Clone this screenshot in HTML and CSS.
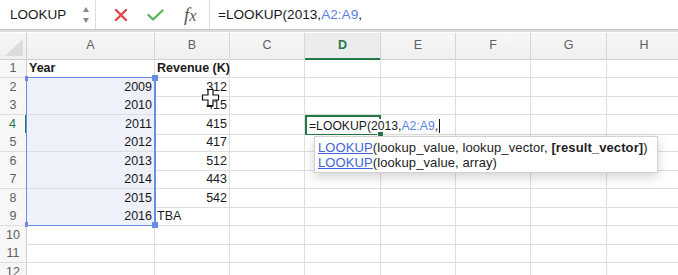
FILE: index.html
```html
<!DOCTYPE html>
<html lang="en">
<head>
    <meta charset="UTF-8">
    <title>LOOKUP</title>
    <link rel="stylesheet" href="styles.css">
</head>
<body>

    <!-- Formula bar -->
    <div class="formula-bar">
        <div class="name-box">
            <span class="name">LOOKUP</span>
            <span class="spin">
                <span class="up"></span>
                <span class="down"></span>
            </span>
        </div>
        <div class="actions">
            <svg class="icon" width="14" height="12" viewBox="0 0 14 12">
                <path d="M2 1 L12 11 M12 1 L2 11" stroke="#e3464c" stroke-width="2.4" stroke-linecap="round"/>
            </svg>
            <svg class="icon" width="17" height="12" viewBox="0 0 17 12">
                <path d="M1.5 6 L6 10.5 L15.5 1.5" fill="none" stroke="#5bb75a" stroke-width="2.4" stroke-linecap="round" stroke-linejoin="round"/>
            </svg>
            <span class="fx">f<span>x</span></span>
        </div>
        <div class="formula">=LOOKUP(2013,<span class="ref">A2:A9</span>,</div>
    </div>

    <!-- Sheet -->
    <div class="sheet">
        <div class="row head">
            <div class="corner"></div>
            <div class="ch">A</div><div class="ch">B</div><div class="ch">C</div>
            <div class="ch active">D</div><div class="ch">E</div><div class="ch">F</div>
            <div class="ch">G</div><div class="ch">H</div>
        </div>
        <div class="row">
            <div class="rh">1</div><div class="c bold">Year</div><div class="c bold">Revenue (K)</div>
            <div class="c"></div><div class="c"></div><div class="c"></div><div class="c"></div><div class="c"></div><div class="c"></div>
        </div>
        <div class="row">
            <div class="rh">2</div><div class="c num sel">2009</div><div class="c num">312</div>
            <div class="c"></div><div class="c"></div><div class="c"></div><div class="c"></div><div class="c"></div><div class="c"></div>
        </div>
        <div class="row">
            <div class="rh">3</div><div class="c num sel">2010</div><div class="c num">415</div>
            <div class="c"></div><div class="c"></div><div class="c"></div><div class="c"></div><div class="c"></div><div class="c"></div>
        </div>
        <div class="row">
            <div class="rh active">4</div><div class="c num sel">2011</div><div class="c num">415</div>
            <div class="c"></div>
            <div class="c editing"><span class="edit-text">=LOOKUP(2013,<span class="ref">A2:A9</span>,<span class="caret"></span></span><span class="fill-handle"></span></div>
            <div class="c"></div><div class="c"></div><div class="c"></div><div class="c"></div>
        </div>
        <div class="row">
            <div class="rh">5</div><div class="c num sel">2012</div><div class="c num">417</div>
            <div class="c"></div><div class="c"></div><div class="c"></div><div class="c"></div><div class="c"></div><div class="c"></div>
        </div>
        <div class="row">
            <div class="rh">6</div><div class="c num sel">2013</div><div class="c num">512</div>
            <div class="c"></div><div class="c"></div><div class="c"></div><div class="c"></div><div class="c"></div><div class="c"></div>
        </div>
        <div class="row">
            <div class="rh">7</div><div class="c num sel">2014</div><div class="c num">443</div>
            <div class="c"></div><div class="c"></div><div class="c"></div><div class="c"></div><div class="c"></div><div class="c"></div>
        </div>
        <div class="row">
            <div class="rh">8</div><div class="c num sel">2015</div><div class="c num">542</div>
            <div class="c"></div><div class="c"></div><div class="c"></div><div class="c"></div><div class="c"></div><div class="c"></div>
        </div>
        <div class="row">
            <div class="rh">9</div><div class="c num sel">2016</div><div class="c">TBA</div>
            <div class="c"></div><div class="c"></div><div class="c"></div><div class="c"></div><div class="c"></div><div class="c"></div>
        </div>
        <div class="row">
            <div class="rh">10</div><div class="c"></div><div class="c"></div>
            <div class="c"></div><div class="c"></div><div class="c"></div><div class="c"></div><div class="c"></div><div class="c"></div>
        </div>
        <div class="row">
            <div class="rh">11</div><div class="c"></div><div class="c"></div>
            <div class="c"></div><div class="c"></div><div class="c"></div><div class="c"></div><div class="c"></div><div class="c"></div>
        </div>
        <div class="row">
            <div class="rh">12</div><div class="c"></div><div class="c"></div>
            <div class="c"></div><div class="c"></div><div class="c"></div><div class="c"></div><div class="c"></div><div class="c"></div>
        </div>

        <!-- Range A2:A9 highlighted by the formula -->
        <div class="range">
            <span class="handle tl"></span>
            <span class="handle tr"></span>
            <span class="handle bl"></span>
            <span class="handle br"></span>
        </div>

        <!-- Function hint -->
        <div class="hint">
            <div><a href="#">LOOKUP</a>(lookup_value, lookup_vector, <b>[result_vector]</b>)</div>
            <div><a href="#">LOOKUP</a>(lookup_value, array)</div>
        </div>

        <!-- Mouse pointer -->
        <svg class="pointer" width="19" height="19" viewBox="0 0 19 19">
            <path d="M7 1.5 H12 V7 H17.5 V12 H12 V17.5 H7 V12 H1.5 V7 H7 Z" fill="#fff" stroke="#111" stroke-width="1.2"/>
        </svg>
    </div>

</body>
</html>
```

FILE: styles.css
```css
body {
    margin: 0;
    width: 678px;
    height: 275px;
    overflow: hidden;
    background-color: #fff;
    font-family: "Liberation Sans", Arial, sans-serif;
    color: #1a1a1a;
}

/* Formula bar */
.formula-bar {
    display: flex;
    align-items: center;
    height: 29px;
    border-bottom: 1px solid #c4c4c4;
    box-shadow: 0 2px 0 #dcdcdc;
    margin-bottom: 3px;
}

.name-box {
    display: flex;
    align-items: center;
    width: 96px;
    height: 100%;
    border-right: 1px solid #dcdcdc;
    padding-left: 10px;
    box-sizing: border-box;
}

.name {
    font-size: 13.5px;
    flex-grow: 1;
}

.spin {
    display: flex;
    flex-direction: column;
    gap: 6px;
    margin-right: 6px;
}

.spin .up,
.spin .down {
    width: 0;
    height: 0;
    border-left: 3.5px solid transparent;
    border-right: 3.5px solid transparent;
}

.spin .up {
    border-bottom: 5px solid #8a8a8a;
}

.spin .down {
    border-top: 5px solid #8a8a8a;
}

.actions {
    display: flex;
    align-items: center;
    height: 100%;
    gap: 19px;
    padding-left: 18px;
    padding-right: 8px;
    border-right: 1px solid #dcdcdc;
    box-sizing: border-box;
    width: 114px;
}

.fx {
    font-family: "Liberation Serif", serif;
    font-style: italic;
    font-size: 19px;
    color: #555;
    margin-left: 1px;
}

.fx span {
    font-size: 16px;
}

.formula {
    padding-left: 8px;
    font-size: 13.6px;
    white-space: nowrap;
}

.ref {
    color: #5a7fe8;
}

/* Sheet */
.sheet {
    position: relative;
}

.row {
    display: grid;
    grid-template-columns: 27px 128px 75px 75px 76px 75px 75px 76px 75px;
    height: 18.5px;
}

.row.head {
    height: 26px;
    background: linear-gradient(#f7f7f7, #efefef);
}

.corner {
    border-right: 1px solid #d0d0d0;
    border-bottom: 1px solid #d0d0d0;
    position: relative;
}

.corner::after {
    content: "";
    position: absolute;
    right: 3px;
    bottom: 3px;
    border-left: 18px solid transparent;
    border-bottom: 17px solid #dcdcdc;
}

.ch {
    border-right: 1px solid #d6d6d6;
    border-bottom: 1px solid #d0d0d0;
    text-align: center;
    font-size: 12.5px;
    line-height: 25px;
    color: #606060;
}

.ch.active {
    color: #237a47;
    font-weight: bold;
    border-bottom: 2px solid #237a47;
    background-color: #ececec;
}

.rh {
    background-color: #f7f7f7;
    border-right: 1px solid #d0d0d0;
    border-bottom: 1px solid #dedede;
    text-align: center;
    font-size: 12.5px;
    line-height: 18px;
    color: #606060;
}

.rh.active {
    color: #237a47;
    border-right: 2px solid #237a47;
}

.c {
    border-right: 1px solid #dedede;
    border-bottom: 1px solid #dedede;
    font-size: 12.5px;
    line-height: 18px;
    padding: 0 2px;
    white-space: nowrap;
    box-sizing: border-box;
}

.bold {
    font-weight: bold;
}

.num {
    text-align: right;
}

.sel {
    background-color: #eef0fa;
}

/* Cell being edited: green frame, text runs over the next cell */
.editing {
    position: relative;
    z-index: 2;
    overflow: visible;
    border: none;
    box-shadow: inset 0 0 0 2px #237a47;
    padding: 2px 0 0 2px;
}

.edit-text {
    position: relative;
    display: inline-block;
    background-color: #fff;
    font-size: 12.2px;
    line-height: 15px;
    padding: 0 2px 0 2px;
}

.fill-handle {
    position: absolute;
    right: -3px;
    bottom: -3px;
    width: 5px;
    height: 5px;
    background-color: #237a47;
    border: 1px solid #fff;
}

.caret {
    display: inline-block;
    width: 1px;
    height: 14px;
    background-color: #111;
    vertical-align: -3px;
    margin-left: 1px;
}

/* Range highlight */
.range {
    position: absolute;
    left: 26px;
    top: 44px;
    width: 129px;
    height: 149px;
    border: 1.5px solid #6a8de3;
    box-sizing: border-box;
}

.range::after {
    content: "";
    position: absolute;
    top: -1px;
    right: -2px;
    width: 2px;
    height: 100%;
    background-color: #6a8de3;
}

.handle {
    position: absolute;
    background-color: #6a8de3;
}

.handle.tl,
.handle.bl {
    left: -2px;
    width: 3px;
    height: 5px;
}

.handle.tl { top: -2px; }
.handle.bl { bottom: -2px; }

.handle.tr,
.handle.br {
    right: -4px;
    width: 6px;
    height: 6px;
}

.handle.tr { top: -3px; }
.handle.br { bottom: -3px; }

/* Function hint */
.hint {
    position: absolute;
    left: 314px;
    top: 103px;
    width: 344px;
    height: 37px;
    box-sizing: border-box;
    background-color: #fff;
    border: 1px solid #d2d2d2;
    box-shadow: 0 4px 12px rgba(0, 0, 0, 0.18);
    padding: 3px 3px;
    font-size: 13px;
    letter-spacing: 0.1px;
    line-height: 15px;
    color: #222;
    z-index: 3;
    white-space: nowrap;
}

.hint a {
    color: #3f63dc;
}

.pointer {
    position: absolute;
    left: 201px;
    top: 55px;
    z-index: 3;
}
```
